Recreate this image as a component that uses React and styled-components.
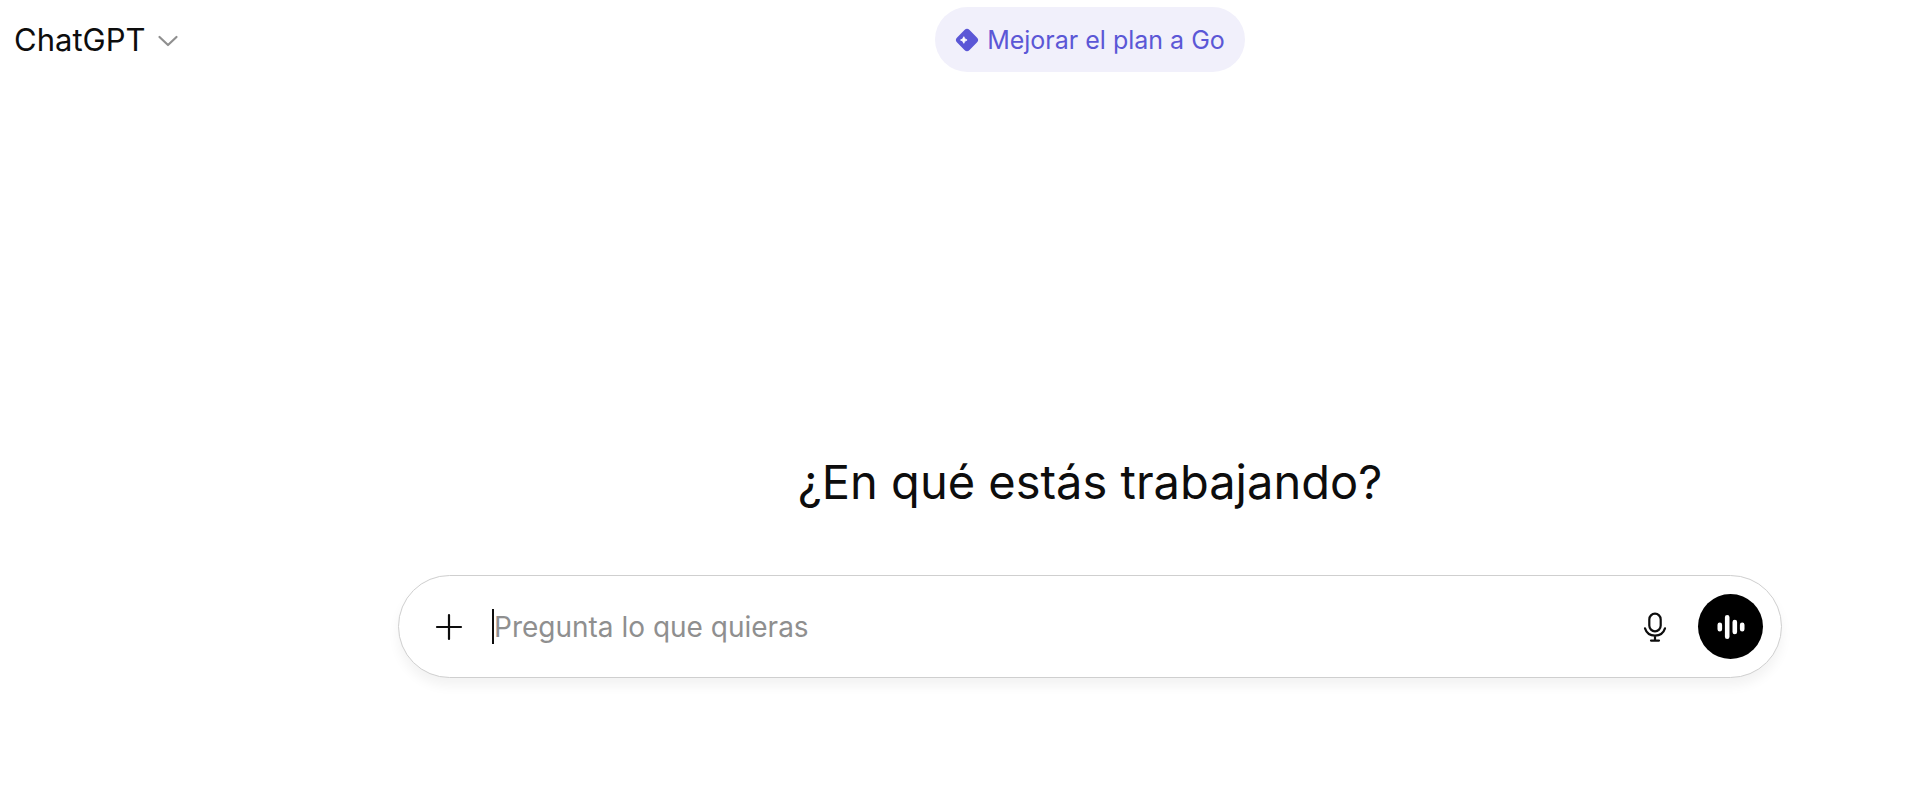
import React from "react";
import styled, { createGlobalStyle } from "styled-components";

const GlobalStyle = createGlobalStyle`
  *, *::before, *::after { box-sizing: border-box; }
  body {
    margin: 0;
    background: #fff;
    color: #0d0d0d;
    font-family: Inter, "Liberation Sans", sans-serif;
    overflow-x: hidden;
  }
  button, input { font: inherit; color: inherit; }
`;

const Page = styled.div`
  min-height: 100vh;
  display: flex;
  flex-direction: column;
`;

const Header = styled.header`
  display: grid;
  grid-template-columns: 260px minmax(0, 1fr);
  align-items: center;
  padding-top: 7px;
`;

const PlainButton = styled.button`
  display: inline-flex;
  align-items: center;
  justify-content: center;
  padding: 0;
  border: 0;
  background: none;
  cursor: pointer;
  white-space: nowrap;
`;

const ModelButton = styled(PlainButton)`
  justify-self: start;
  gap: 12px;
  margin-left: 14px;
  font-size: 31px;
  line-height: 40px;

  svg { color: #8f8f8f; }
`;

const UpgradeButton = styled(PlainButton)`
  justify-self: center;
  gap: 8px;
  height: 65px;
  padding: 0 20px;
  border-radius: 33px;
  background: #f1f0fb;
  color: #5b57d6;
  font-size: 25px;
  line-height: 32px;
`;

const Main = styled.main`
  display: flex;
  flex-direction: column;
  gap: 61px;
  margin-left: 260px;
  padding: 378px 138px 0;
`;

const Heading = styled.h1`
  margin: 0;
  text-align: center;
  font-size: 47px;
  line-height: 64px;
  font-weight: 400;
`;

const Composer = styled.form`
  display: flex;
  align-items: center;
  height: 103px;
  padding: 0 18px 0 36px;
  border: 1px solid #cfcfcf;
  border-radius: 52px;
  background: #fff;
  box-shadow: 0 8px 12px rgba(0, 0, 0, 0.05);
`;

const Field = styled.label`
  flex: 1;
  display: flex;
  align-items: center;
  min-width: 0;
  margin-left: 29px;
`;

const Caret = styled.span`
  width: 2px;
  height: 35px;
  background: #0d0d0d;
`;

const Prompt = styled.input`
  flex: 1;
  min-width: 0;
  padding: 0;
  border: 0;
  outline: 0;
  background: none;
  caret-color: transparent;
  font-size: 28px;
  line-height: 40px;

  &::placeholder { color: #8f8f8f; opacity: 1; }
`;

const VoiceButton = styled(PlainButton)`
  width: 65px;
  height: 65px;
  margin-left: 31px;
  border-radius: 50%;
  background: #000;
  color: #fff;
`;

const ChevronIcon = () => (
  <svg width="22" height="22" viewBox="0 0 22 22" fill="none" stroke="currentColor" strokeWidth="2.2" strokeLinecap="round" strokeLinejoin="round" aria-hidden="true">
    <path d="M2.500 8 11 16 19.500 8" />
  </svg>
);

const GoIcon = () => (
  <svg width="24" height="24" viewBox="0 0 24 24" fill="currentColor" aria-hidden="true">
    <rect x="3.2" y="3.2" width="17.6" height="17.6" rx="3.6" transform="rotate(45 12 12)" />
    <path d="M8.800 8.700Q9.400 11.400 12.100 12Q9.400 12.600 8.800 15.300Q8.200 12.600 5.500 12Q8.200 11.400 8.800 8.700Z" fill="#fff" stroke="#fff" strokeWidth=".8" strokeLinejoin="round" />
  </svg>
);

const PlusIcon = () => (
  <svg width="28" height="28" viewBox="0 0 28 28" fill="none" stroke="currentColor" strokeWidth="2.2" strokeLinecap="round" aria-hidden="true">
    <path d="M14 2V26M2 14H26" />
  </svg>
);

const MicIcon = () => (
  <svg width="24" height="32" viewBox="0 0 24 32" fill="none" stroke="currentColor" strokeWidth="2.2" strokeLinecap="round" strokeLinejoin="round" aria-hidden="true">
    <rect x="6.3" y="2.7" width="11.4" height="17.6" rx="5.7" />
    <path d="M2 17.4C3.4 21.8 7.4 24.6 12 24.6S20.600 21.8 22 17.4M12 24.600V29.600M8 29.600H16" />
  </svg>
);

const VoiceIcon = () => (
  <svg width="28" height="26" viewBox="0 0 28 26" fill="none" stroke="currentColor" strokeWidth="4.600" strokeLinecap="round" aria-hidden="true">
    <path d="M2.800 10.800V15.200M10.200 3.300V22.700M17.800 8V18M25.200 10.800V15.200" />
  </svg>
);

export default function App() {
  return (
    <Page>
      <GlobalStyle />
      <Header>
        <ModelButton type="button">
          ChatGPT
          <ChevronIcon />
        </ModelButton>
        <UpgradeButton type="button">
          <GoIcon />
          Mejorar el plan a Go
        </UpgradeButton>
      </Header>
      <Main>
        <Heading>¿En qué estás trabajando?</Heading>
        <Composer onSubmit={(event) => event.preventDefault()}>
          <PlainButton type="button" aria-label="Añadir">
            <PlusIcon />
          </PlainButton>
          <Field>
            <Caret />
            <Prompt type="text" placeholder="Pregunta lo que quieras" aria-label="Pregunta lo que quieras" />
          </Field>
          <PlainButton type="button" aria-label="Dictar">
            <MicIcon />
          </PlainButton>
          <VoiceButton type="button" aria-label="Usar voz">
            <VoiceIcon />
          </VoiceButton>
        </Composer>
      </Main>
    </Page>
  );
}
